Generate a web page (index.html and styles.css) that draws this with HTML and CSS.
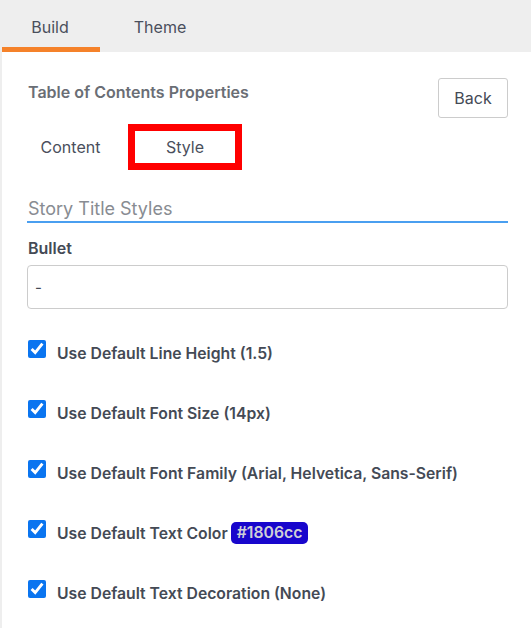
FILE: index.html
```html
<!DOCTYPE html>
<html lang="en">
<head>
  <meta charset="UTF-8">
  <meta name="viewport" content="width=device-width, initial-scale=1.0">
  <title>Table of Contents Properties</title>
  <link rel="stylesheet" href="styles.css">
</head>
<body>
  <div class="top-tabs">
    <div class="top-tab active">Build</div>
    <div class="top-tab">Theme</div>
  </div>
  <div class="panel">
    <div class="panel-head">
      <h2>Table of Contents Properties</h2>
      <button class="back-btn">Back</button>
    </div>
    <div class="sub-tabs">
      <div class="sub-tab">Content</div>
      <div class="sub-tab selected">Style</div>
    </div>
    <div class="section-title">Story Title Styles</div>
    <label class="field-label" for="bullet">Bullet</label>
    <input type="text" id="bullet" class="field-input" value="-">
    <div class="check-list">
      <label class="check-row"><input type="checkbox" checked> Use Default Line Height (1.5)</label>
      <label class="check-row"><input type="checkbox" checked> Use Default Font Size (14px)</label>
      <label class="check-row"><input type="checkbox" checked> Use Default Font Family (Arial, Helvetica, Sans-Serif)</label>
      <label class="check-row"><input type="checkbox" checked> Use Default Text Color <span class="color-badge">#1806cc</span></label>
      <label class="check-row"><input type="checkbox" checked> Use Default Text Decoration (None)</label>
    </div>
  </div>
</body>
</html>
```

FILE: styles.css
```css
html, body {
  margin: 0;
  padding: 0;
  font-family: Inter, 'Liberation Sans', sans-serif;
  background: #ffffff;
  color: #444a55;
}
body {
  border-left: 2px solid #eeeeee;
  min-height: 628px;
  box-sizing: border-box;
}
.top-tabs {
  display: flex;
  background: #eeeeee;
  height: 52px;
  margin-left: -2px;
}
.top-tab {
  width: 100px;
  box-sizing: border-box;
  display: flex;
  align-items: center;
  justify-content: center;
  font-size: 16px;
  color: #4a4f5c;
  border-bottom: 5px solid transparent;
  padding-top: 7px;
}
.top-tab.active {
  border-bottom-color: #f5822a;
}
.top-tab + .top-tab {
  width: 120px;
}
.panel {
  padding: 26px 23px 0 25px;
}
.panel-head {
  display: flex;
  justify-content: space-between;
  align-items: flex-start;
}
.panel-head h2 {
  margin: 4px 0 0 1px;
  font-size: 16px;
  font-weight: 600;
  color: #6a6e75;
}
.back-btn {
  width: 70px;
  height: 40px;
  background: #ffffff;
  border: 1px solid #cccccc;
  border-radius: 3px;
  font-family: inherit;
  font-size: 16px;
  color: #444a55;
  padding: 0;
}
.sub-tabs {
  display: flex;
  margin-top: 6px;
}
.sub-tab {
  width: 87px;
  height: 46px;
  box-sizing: border-box;
  display: flex;
  align-items: center;
  justify-content: center;
  font-size: 16px;
  color: #4a4f5c;
}
.sub-tab.selected {
  width: 114px;
  margin-left: 14px;
  border: 7px solid #ff0000;
}
.section-title {
  margin-top: 28px;
  padding: 0 0 2px 1px;
  font-size: 18px;
  color: #888c92;
  border-bottom: 2px solid #4a9ff0;
}
.field-label {
  display: block;
  margin: 15px 0 7px 1px;
  font-size: 16px;
  font-weight: 600;
  color: #444a55;
}
.field-input {
  display: block;
  width: 100%;
  height: 44px;
  box-sizing: border-box;
  border: 1px solid #cccccc;
  border-radius: 4px;
  padding: 0 7px;
  font-family: inherit;
  font-size: 15px;
  color: #444a55;
}
.check-list {
  display: flex;
  flex-direction: column;
  gap: 36px;
  margin-top: 32px;
}
.check-row {
  display: flex;
  align-items: center;
  height: 24px;
  font-size: 15.75px;
  font-weight: 600;
  color: #444a55;
  margin-left: 1px;
}
.check-row input {
  width: 18px;
  height: 18px;
  margin: 0 11px 0 0;
  accent-color: #0a75f0;
  position: relative;
  top: -4px;
}
.color-badge {
  display: inline-block;
  margin-left: 3px;
  padding: 1px 6px 2px;
  border-radius: 5px;
  background: #1806cc;
  color: #cfcfd8;
  font-weight: 600;
}
```
